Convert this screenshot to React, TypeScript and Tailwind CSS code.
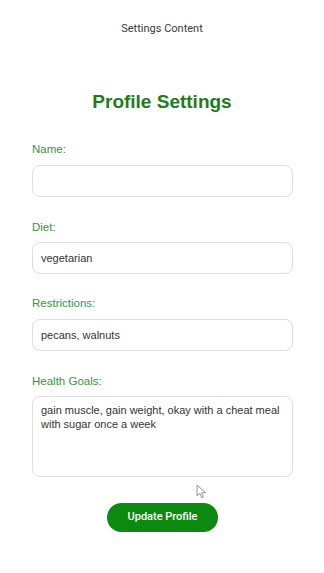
import React from "react";

const labelCls =
  "block text-[11.5px] leading-[14px] text-[#3d9140] font-['Liberation_Sans',Arial,sans-serif]";
const inputCls =
  "block w-full h-[32px] rounded-[8px] border-[1.5px] border-[#dedede] bg-white px-[8px] text-[11px] text-[#333] font-['Liberation_Sans',Arial,sans-serif] outline-none";

export default function App() {
  return (
    <div className="relative w-[324px] h-[573px] bg-white overflow-hidden">
      <p className="pt-[22px] text-center text-[11px] leading-[14px] text-[#3a3a3a] font-['Roboto',sans-serif]">
        Settings Content
      </p>
      <h1 className="mt-[54px] text-center text-[19px] leading-[24px] font-bold text-[#1d7d1f] font-['Liberation_Sans',Arial,sans-serif]">
        Profile Settings
      </h1>
      <form className="mt-[28px] pl-[32px] pr-[31px] flex flex-col">
        <label className={labelCls}>Name:</label>
        <input className={`${inputCls} mt-[9px]`} defaultValue="" />
        <label className={`${labelCls} mt-[23px]`}>Diet:</label>
        <input className={`${inputCls} mt-[8px]`} defaultValue="vegetarian" />
        <label className={`${labelCls} mt-[22px]`}>Restrictions:</label>
        <input className={`${inputCls} mt-[9px]`} defaultValue="pecans, walnuts" />
        <label className={`${labelCls} mt-[23px]`}>Health Goals:</label>
        <textarea
          className="block mt-[8px] w-full h-[81px] resize-none rounded-[8px] border-[1.5px] border-[#dedede] bg-white pl-[8px] pr-[2px] pt-[6px] text-[11px] leading-[14px] text-[#333] font-['Liberation_Sans',Arial,sans-serif] outline-none"
          defaultValue="gain muscle, gain weight, okay with a cheat meal with sugar once a week"
        />
        <div className="flex justify-center mt-[26px]">
          <button
            type="button"
            className="w-[111px] h-[29px] rounded-full bg-[#0b8a0f] text-white text-[11px] font-medium font-['Roboto',sans-serif]"
          >
            Update Profile
          </button>
        </div>
      </form>
      <svg
        className="absolute left-[196px] top-[484px]"
        width="11"
        height="15"
        viewBox="0 0 11 15"
      >
        <path
          d="M1 1 L1 12 L3.8 9.4 L5.8 13.8 L7.4 13 L5.5 8.8 L9.4 8.6 Z"
          fill="white"
          stroke="#8a8a8a"
          strokeWidth="0.9"
          strokeLinejoin="round"
        />
      </svg>
    </div>
  );
}
